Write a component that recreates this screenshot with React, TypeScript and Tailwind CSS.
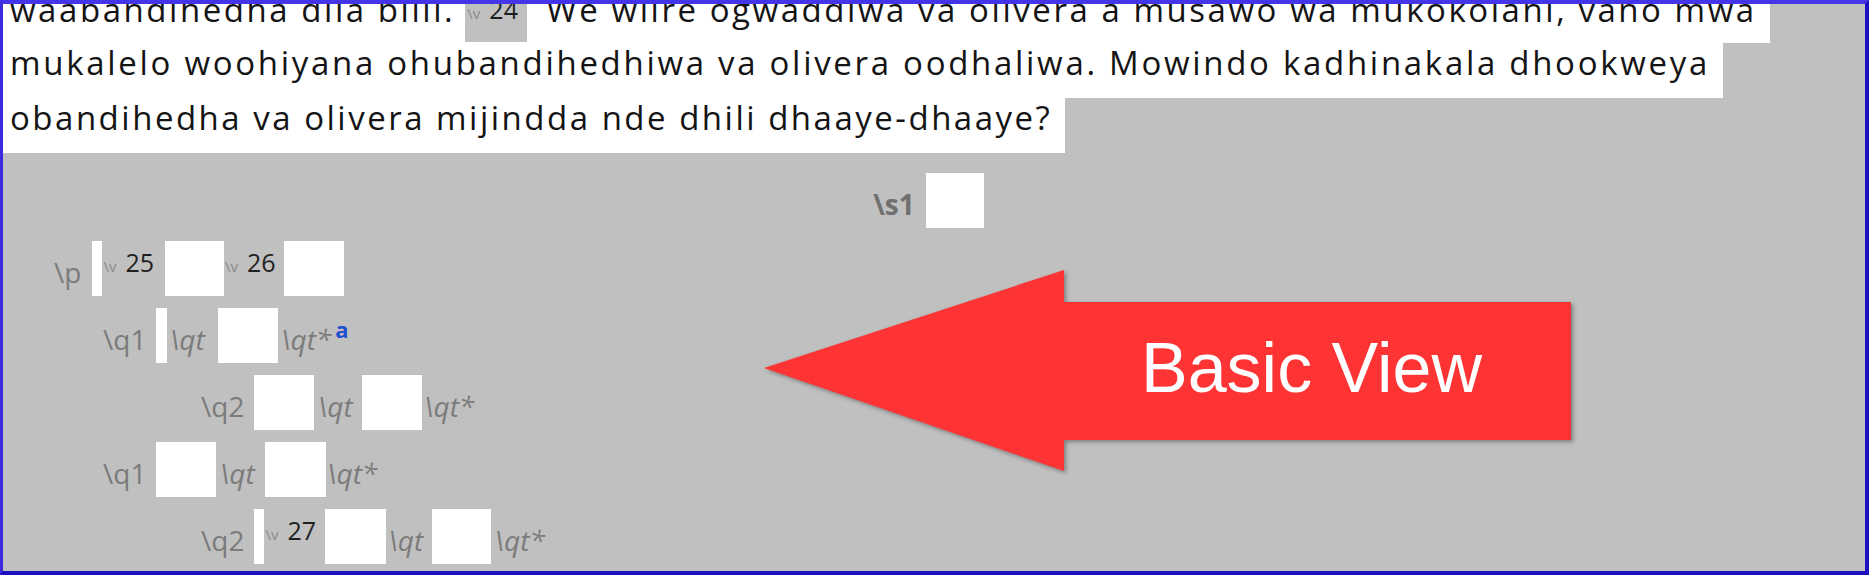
// Editor "Basic View": testo evidenziato in alto, marcatori USFM sotto, freccia di annotazione.

const Marker = ({ children, italic, className = '' }: { children: React.ReactNode; italic?: boolean; className?: string }) => (
  <span className={`text-[28px] leading-[28px] pb-[10px] text-[#7b7b7b] whitespace-pre ${italic ? 'italic' : ''} ${className}`}>
    {children}
  </span>
)

const Box = ({ w, className = '' }: { w: string; className?: string }) => (
  <div className={`self-stretch bg-white ${w} ${className}`} />
)

const Verse = ({ n, className = '' }: { n: string; className?: string }) => (
  <span className={`self-start flex items-baseline pt-[9px] ${className}`}>
    <span className="text-[15px] leading-none text-[#8a8a8a] ml-[1px] mr-[9px]">\v</span>
    <span className="text-[25px] leading-none text-[#1f1f1f]">{n}</span>
  </span>
)

function Riga({ children, className = '' }: { children: React.ReactNode; className?: string }) {
  return <div className={`flex items-end h-[55px] ${className}`}>{children}</div>
}

export default function App() {
  return (
    <div className="relative w-[1869px] h-[575px] overflow-hidden bg-[#c0c0c0] border-t-[4px] border-l-[3px] border-r-[4px] border-b-[4px] border-t-[#4535e8] border-l-[#3b2be0] border-r-[#1b11c2] border-b-[#1a10c0] font-['Open_Sans',sans-serif]">
      <div className="-mt-[16px] flex flex-col">
        {/* Paragrafo evidenziato */}
        <div className="flex h-[55px] w-fit bg-white pl-[7px] pr-[13px] text-[33px] tracking-[2.55px] text-[#141414]">
          <span className="leading-[44px] whitespace-pre">waabandihedha dila biili.</span>
          <span className="flex h-[54px] w-[62px] bg-[#c0c0c0] pl-[1px] ml-[10px] tracking-normal">
            <Verse n="24" />
          </span>
          <span className="leading-[44px] whitespace-pre ml-[19px]">We wiire ogwaddiwa va olivera a musawo wa mukokolani, vano mwa</span>
        </div>
        <div className="h-[55px] w-fit bg-white pl-[7px] pr-[13px] text-[33px] tracking-[2.7px] leading-[40px] text-[#141414] whitespace-pre">
          mukalelo woohiyana ohubandihedhiwa va olivera oodhaliwa. Mowindo kadhinakala dhookweya
        </div>
        <div className="h-[55px] w-fit bg-white pl-[7px] pr-[13px] text-[33px] tracking-[2.5px] leading-[40px] text-[#141414] whitespace-pre">
          obandihedha va olivera mijindda nde dhili dhaaye-dhaaye?
        </div>

        {/* \s1 centrato */}
        <Riga className="justify-center mt-[20px] h-[54px] pr-[11px]">
          <span className="text-[28px] leading-[28px] pb-[10px] font-bold text-[#6f6f6f]">\s1</span>
          <Box w="w-[58px]" className="ml-[11px]" />
        </Riga>

        <div className="flex flex-col gap-[12px] mt-[13px]">
          <Riga className="pl-[51px]">
            <Marker>\p</Marker>
            <Box w="w-[10px]" className="ml-[11px]" />
            <Verse n="25" />
            <Box w="w-[59px]" className="ml-[11px]" />
            <Verse n="26" />
            <Box w="w-[60px]" className="ml-[8px]" />
          </Riga>
          <Riga className="pl-[100px]">
            <Marker>\q1</Marker>
            <Box w="w-[11px]" className="ml-[10px]" />
            <Marker italic className="ml-[2px]">\qt</Marker>
            <Box w="w-[60px]" className="ml-[13px]" />
            <Marker italic className="ml-[3px]">\qt*</Marker>
            <span className="self-start pt-[10px] text-[22px] leading-none font-bold text-[#1f4fd0] ml-[4px]">a</span>
          </Riga>
          <Riga className="pl-[198px]">
            <Marker>\q2</Marker>
            <Box w="w-[60px]" className="ml-[10px]" />
            <Marker italic className="ml-[3px]">\qt</Marker>
            <Box w="w-[60px]" className="ml-[9px]" />
            <Marker italic className="ml-[2px]">\qt*</Marker>
          </Riga>
          <Riga className="pl-[100px]">
            <Marker>\q1</Marker>
            <Box w="w-[60px]" className="ml-[10px]" />
            <Marker italic className="ml-[3px]">\qt</Marker>
            <Box w="w-[61px]" className="ml-[10px]" />
            <Marker italic className="ml-[1px]">\qt*</Marker>
          </Riga>
          <Riga className="pl-[198px]">
            <Marker>\q2</Marker>
            <Box w="w-[10px]" className="ml-[10px]" />
            <Verse n="27" />
            <Box w="w-[61px]" className="ml-[9px]" />
            <Marker italic className="ml-[2px]">\qt</Marker>
            <Box w="w-[59px]" className="ml-[9px]" />
            <Marker italic className="ml-[3px]">\qt*</Marker>
          </Riga>
        </div>
      </div>

      {/* Freccia di annotazione */}
      <svg
        className="absolute left-[761px] top-[264px] drop-shadow-[2px_2px_2px_rgba(0,0,0,0.35)]"
        width="815"
        height="212"
        viewBox="0 0 815 212"
      >
        <polygon points="0,100 300,2 300,34 807,34 807,172 300,172 300,203" fill="#fe3434" />
      </svg>
      <div className="absolute left-[1045px] top-[298px] w-[523px] h-[138px] flex items-center justify-center pl-[4px] pb-[6px] font-['Liberation_Sans',Arial,sans-serif] text-[70px] leading-none text-white">
        Basic View
      </div>
    </div>
  )
}
